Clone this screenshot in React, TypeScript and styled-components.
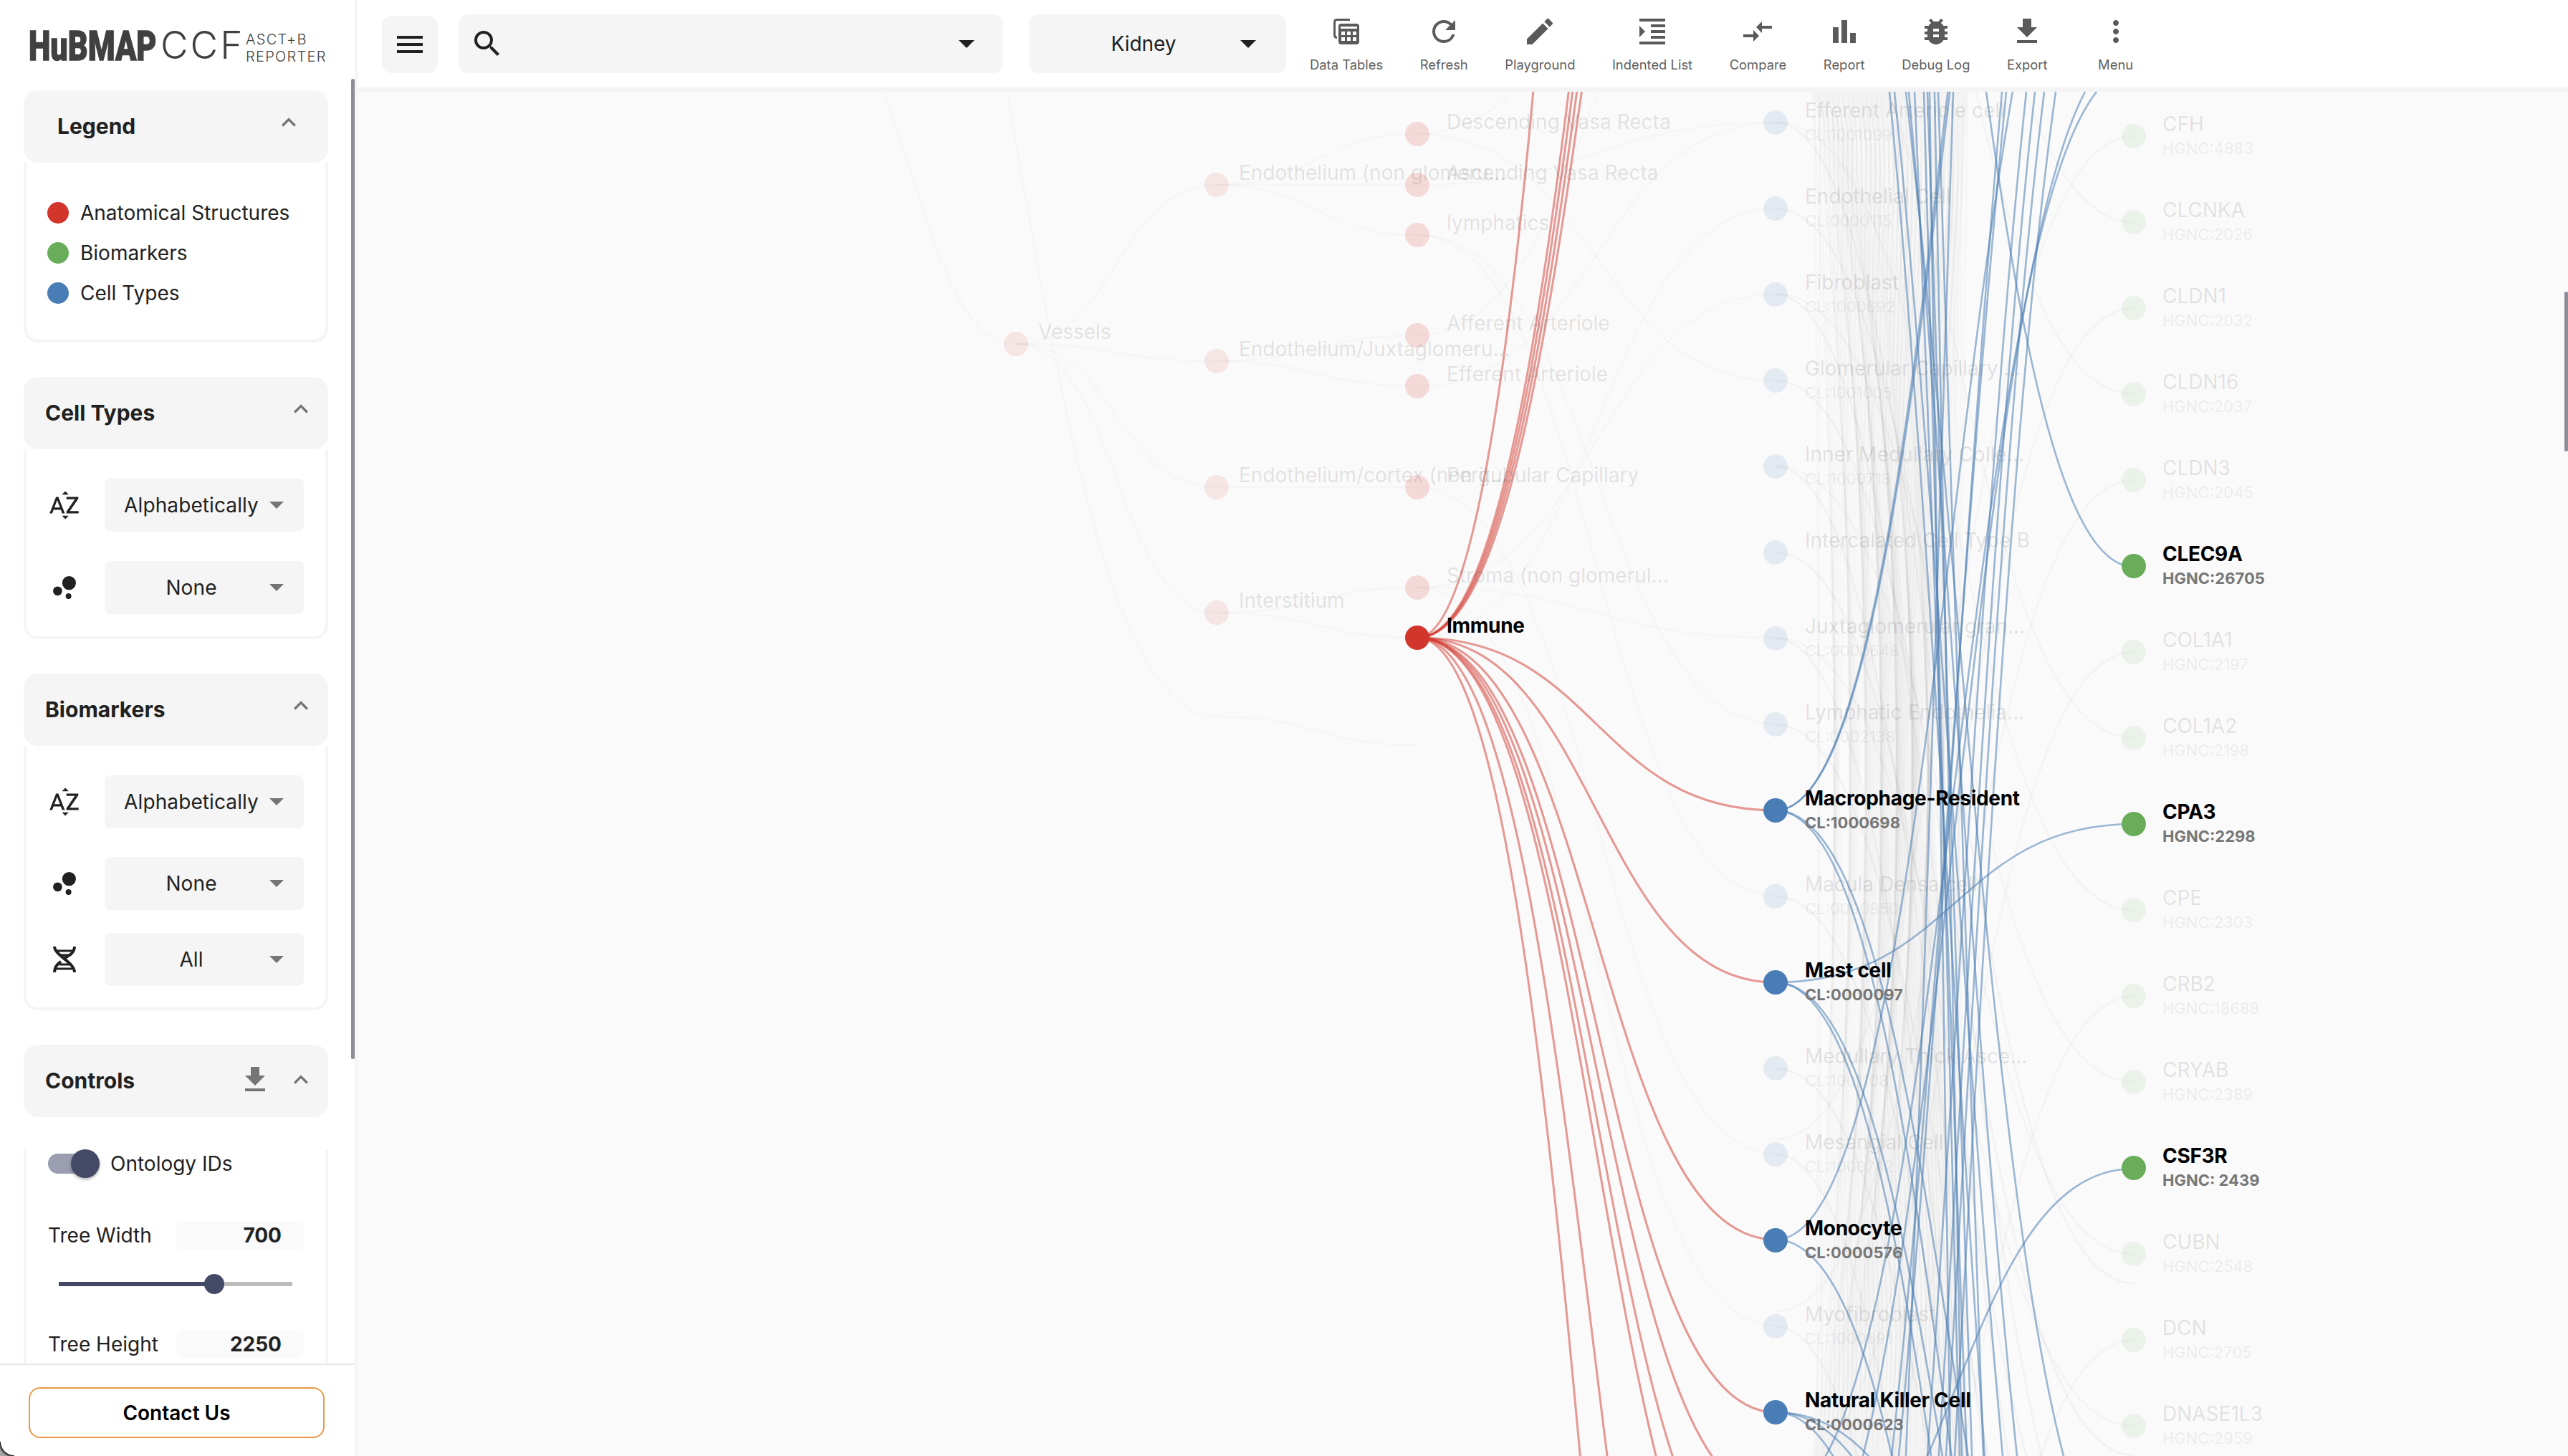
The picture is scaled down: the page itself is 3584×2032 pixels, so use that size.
import React from 'react';
import styled, { createGlobalStyle } from 'styled-components';
import {
  MdRefresh, MdEdit, MdFormatIndentIncrease, MdCompareArrows, MdBarChart,
  MdBugReport, MdFileDownload, MdMoreVert, MdMenu, MdSearch, MdExpandLess, MdSortByAlpha,
  MdBubbleChart,
} from 'react-icons/md';

const Global = createGlobalStyle`
  html, body { margin: 0; padding: 0; background: #fff; overflow: hidden; }
  * { box-sizing: border-box; }
  body { font-family: Inter, "Noto Sans", sans-serif; color: #212121; }
`;

const Page = styled.div`
  position: relative;
  width: 3584px;
  height: 2032px;
  display: flex;
  overflow: hidden;
`;

const Sidebar = styled.aside`
  width: 499px;
  height: 100%;
  flex: none;
  display: flex;
  flex-direction: column;
  background: #fff;
  border-right: 4px solid #f5f5f5;
  position: relative;
`;

const LogoBar = styled.div`
  height: 126px;
  flex: none;
  display: flex;
  align-items: flex-start;
  padding: 43px 0 0 40px;
  color: #404040;
`;

const LogoHeavy = styled.span`
  display: block;
  width: 184px;
  font: 900 58px/42px Roboto, sans-serif;
  -webkit-text-stroke: 1.4px #404040;
  transform: scaleX(0.745);
  transform-origin: left center;
  white-space: nowrap;
`;

const LogoThin = styled.span`
  display: block;
  width: 119px;
  font: 300 53px/40px Inter, sans-serif;
  letter-spacing: 3px;
  white-space: nowrap;
`;

const LogoSmall = styled.span`
  display: block;
  font: 300 20px/23px Inter, sans-serif;
  letter-spacing: 1.3px;
  white-space: nowrap;
  padding-top: 1px;
`;

const Scroller = styled.div`
  flex: 1;
  min-height: 0;
  overflow: hidden;
  padding: 0 0 0 33px;
`;

const Panel = styled.section`
  width: 425px;
  margin-bottom: 48px;
`;

const PanelHeader = styled.header<{ $inset?: boolean }>`
  height: 101px;
  background: #f5f5f5;
  border-radius: 20px;
  display: flex;
  align-items: flex-start;
  padding: 30px 0 0 ${p => (p.$inset ? 47 : 30)}px;
  position: relative;
`;

const PanelTitle = styled.h2`
  margin: 0;
  flex: 1;
  font: 700 30px/40px Inter, sans-serif;
  color: #212121;
`;

const HeaderIcons = styled.div<{ $right: number }>`
  display: flex;
  align-items: center;
  gap: 20px;
  color: #757575;
  padding-right: ${p => p.$right}px;
  margin-top: -5px;
`;

const PanelBody = styled.div<{ $top: number; $bottom: number }>`
  border: 4px solid #f5f5f5;
  border-top: 0;
  border-radius: 0 0 20px 20px;
  padding: ${p => p.$top}px 30px ${p => p.$bottom}px 30px;
`;

const LegendRow = styled.div`
  height: 56px;
  display: flex;
  align-items: center;
  gap: 16px;
  font: 400 28px/40px Inter, sans-serif;
  margin-left: -1px;
`;

const Dot = styled.span<{ $color: string }>`
  width: 30px;
  height: 30px;
  border-radius: 50%;
  background: ${p => p.$color};
`;

const SelectRow = styled.div<{ $gap: number }>`
  display: flex;
  align-items: center;
  margin-bottom: ${p => p.$gap}px;
  &:last-child { margin-bottom: 0; }
`;

const RowIcon = styled.div`
  width: 109px;
  margin-left: -30px;
  padding-right: 3px;
  flex: none;
  display: flex;
  justify-content: center;
  color: #212121;
  svg { display: block; }
`;

const SelectBox = styled.div`
  width: 278px;
  height: 74px;
  background: #f5f5f5;
  border-radius: 8px;
  display: flex;
  align-items: center;
  padding: 0 28px 0 18px;
  font: 400 28px/40px Inter, sans-serif;
  color: #212121;
  letter-spacing: 0.1px;
`;

const SelectText = styled.span`
  flex: 1;
  text-align: center;
  white-space: nowrap;
`;

const SelectArrow = styled.span`
  width: 0;
  height: 0;
  border-left: 10px solid transparent;
  border-right: 10px solid transparent;
  border-top: 10px solid #757575;
  margin-left: 6px;
`;

const ToggleRow = styled.div`
  display: flex;
  align-items: center;
  gap: 15px;
  height: 40px;
  font: 400 28px/40px Inter, sans-serif;
  margin-top: 45px;
`;

const Toggle = styled.span`
  position: relative;
  width: 72px;
  height: 28px;
  border-radius: 14px;
  background: #9a9eb0;
`;

const ToggleThumb = styled.span`
  position: absolute;
  right: 0;
  top: -6px;
  width: 40px;
  height: 40px;
  border-radius: 50%;
  background: #444a65;
  box-shadow: 0 2px 4px rgba(0, 0, 0, 0.3);
`;

const FieldRow = styled.div<{ $top: number }>`
  display: flex;
  align-items: center;
  justify-content: space-between;
  height: 40px;
  margin-top: ${p => p.$top}px;
  font: 400 28px/40px Inter, sans-serif;
`;

const FieldValue = styled.span`
  width: 178px;
  height: 40px;
  background: #fafafa;
  border-radius: 8px;
  text-align: right;
  padding-right: 31px;
  font: 700 28px/40px Inter, sans-serif;
`;

const SliderTrack = styled.div`
  position: relative;
  width: 326px;
  height: 6px;
  margin: 45px 0 0 15px;
  background: #bdbdbd;
`;

const SliderFill = styled.div`
  height: 100%;
  background: #444a65;
`;

const SliderThumb = styled.span`
  position: absolute;
  top: -11px;
  width: 28px;
  height: 28px;
  margin-left: -14px;
  border-radius: 50%;
  background: #444a65;
`;

const Footer = styled.div`
  height: 129px;
  flex: none;
  border-top: 2px solid #e6e6e6;
  padding: 31px 38px 0 40px;
  background: #fff;
`;

const ContactButton = styled.button`
  width: 413px;
  height: 71px;
  background: #fff;
  border: 2px solid #ea9a49;
  border-radius: 16px;
  font: 600 28px/40px Inter, sans-serif;
  color: #000;
  padding: 0;
`;

const Scrollbar = styled.div<{ $left: number; $top: number; $h: number }>`
  position: absolute;
  left: ${p => p.$left}px;
  top: ${p => p.$top}px;
  width: 5px;
  height: ${p => p.$h}px;
  background: #8b8d99;
  border-radius: 3px;
  z-index: 5;
`;

const WindowCorner = styled.div`
  position: absolute;
  left: 0;
  bottom: 0;
  width: 20px;
  height: 20px;
  background: radial-gradient(circle at 100% 0, transparent 18.5px, #222 19.5px, #a8a8a8 23px);
  z-index: 6;
`;

const Main = styled.main`
  flex: 1;
  min-width: 0;
  display: flex;
  flex-direction: column;
`;

const Toolbar = styled.div`
  height: 128px;
  flex: none;
  background: #fff;
  border-bottom: 6px solid #f4f4f5;
  padding: 20px 0 0 34px;
  display: flex;
  align-items: flex-start;
`;

const MenuButton = styled.div`
  width: 78px;
  height: 80px;
  margin-top: 2px;
  background: #f5f5f5;
  border-radius: 14px;
  display: flex;
  align-items: center;
  justify-content: center;
  color: #212121;
`;

const SearchBox = styled.div`
  width: 760px;
  height: 82px;
  margin-left: 29px;
  background: #f5f5f5;
  border-radius: 14px;
  display: flex;
  align-items: center;
  padding: 0 40px 0 16px;
  color: #212121;
  justify-content: space-between;
`;

const KidneyBox = styled.div`
  width: 359px;
  height: 82px;
  margin-left: 36px;
  background: #f5f5f5;
  border-radius: 14px;
  display: flex;
  align-items: center;
  padding: 0 42px 0 25px;
  font: 400 28px/40px Inter, sans-serif;
  color: #212121;
`;

const KidneyText = styled.span`
  flex: 1;
  text-align: center;
`;

const DarkArrow = styled.span`
  width: 0;
  height: 0;
  border-left: 11px solid transparent;
  border-right: 11px solid transparent;
  border-top: 11px solid #212121;
`;

const Tools = styled.div`
  display: flex;
  gap: 51.5px;
  margin-left: 33px;
`;

const ToolItem = styled.div`
  display: flex;
  flex-direction: column;
  align-items: center;
  color: #5a5a5a;
  &:last-child { margin-left: 19px; }
  svg { display: block; }
`;

const ToolLabel = styled.span`
  font: 400 18.4px/22px Inter, sans-serif;
  color: #5f5f5f;
  white-space: nowrap;
  margin-top: 11px;
`;

const Graph = styled.div`
  flex: 1;
  min-height: 0;
  position: relative;
  overflow: hidden;
  background: #fafafa;
`;

/* the tree is a free canvas: every item has its place from the data, in page coordinates */
const Canvas = styled.div`
  position: absolute;
  left: -499px;
  top: -128px;
  width: 3584px;
  height: 2032px;
`;

const Wires = styled.svg`
  position: absolute;
  left: 0;
  top: 0;
`;

const NodeLabel = styled.div<{ $on?: boolean }>`
  position: absolute;
  white-space: nowrap;
  font: ${p => (p.$on ? 700 : 400)} 28px/34px Inter, sans-serif;
  letter-spacing: ${p => (p.$on ? '-0.3px' : '0')};
  color: ${p => (p.$on ? '#000' : 'rgba(90,90,90,0.16)')};
`;

const NodeId = styled.div<{ $on?: boolean }>`
  font: ${p => (p.$on ? 700 : 400)} 22px/35px Inter, sans-serif;
  letter-spacing: 0;
  color: ${p => (p.$on ? '#777' : 'rgba(90,90,90,0.1)')};
`;

const RED = '#d1352b';
const GREEN = '#69ad5a';
const BLUE = '#4a7db5';

const asNodes: [number, number, string, number, boolean?][] = [
  [1418, 480, 'Vessels', 31, false],
  [1698, 258, 'Endothelium (non glomeru...', 31],
  [1698, 504, 'Endothelium/Juxtaglomeru...', 31],
  [1698, 680, 'Endothelium/cortex (non g...', 31],
  [1698, 855, 'Interstitium', 31],
  [1978, 187, 'Descending Vasa Recta', 41],
  [1978, 258, 'Ascending Vasa Recta', 41],
  [1978, 328, 'lymphatics', 41],
  [1978, 468, 'Afferent Arteriole', 41],
  [1978, 539, 'Efferent Arteriole', 41],
  [1978, 680, 'Peritubular Capillary', 41],
  [1978, 820, 'Stroma (non glomerul...', 41],
  [1978, 890, 'Immune', 41, true],
];

const ctNodes: [string, string, boolean?][] = [
  ['Efferent Arteriole cell', 'CL:1001099'],
  ['Endothelial Cell', 'CL:0000115'],
  ['Fibroblast', 'CL:1000692'],
  ['Glomerular Capillary ...', 'CL:1001005'],
  ['Inner Medullary Colle...', 'CL:1000718'],
  ['Intercalated Cell Type B', ''],
  ['Juxtaglomerular gran...', 'CL:0000648'],
  ['Lymphatic Endothelia...', 'CL:0002138'],
  ['Macrophage-Resident', 'CL:1000698', true],
  ['Macula Densa cell', 'CL:0000850'],
  ['Mast cell', 'CL:0000097', true],
  ['Medullary Thick Asce...', 'CL:1001108'],
  ['Mesangial Cell', 'CL:1000742'],
  ['Monocyte', 'CL:0000576', true],
  ['Myofibroblast', 'CL:1000691'],
  ['Natural Killer Cell', 'CL:0000623', true],
];

const bmNodes: [string, string, boolean?][] = [
  ['CFH', 'HGNC:4883'],
  ['CLCNKA', 'HGNC:2026'],
  ['CLDN1', 'HGNC:2032'],
  ['CLDN16', 'HGNC:2037'],
  ['CLDN3', 'HGNC:2045'],
  ['CLEC9A', 'HGNC:26705', true],
  ['COL1A1', 'HGNC:2197'],
  ['COL1A2', 'HGNC:2198'],
  ['CPA3', 'HGNC:2298', true],
  ['CPE', 'HGNC:2303'],
  ['CRB2', 'HGNC:18688'],
  ['CRYAB', 'HGNC:2389'],
  ['CSF3R', 'HGNC: 2439', true],
  ['CUBN', 'HGNC:2548'],
  ['DCN', 'HGNC:2705'],
  ['DNASE1L3', 'HGNC:2959'],
];

const ctY = (i: number) => 171 + i * 120;
const bmY = (i: number) => 190 + i * 120;

const link = (x0: number, y0: number, x1: number, y1: number) => {
  const m = (x0 + x1) / 2;
  return `M${x0} ${y0}C${m} ${y0} ${m} ${y1} ${x1} ${y1}`;
};

/* S-curve share of the height reached at a given share of the width */
const shareAt = (f: number) => {
  let lo = 0;
  let hi = 1;
  for (let i = 0; i < 30; i++) {
    const t = (lo + hi) / 2;
    if (1.5 * t - 1.5 * t * t + t * t * t < f) lo = t;
    else hi = t;
  }
  return 3 * lo * lo - 2 * lo * lo * lo;
};

/* a CT to biomarker link whose ends are off-canvas, given where it crosses the top and bottom */
const through = (xTop: number, xBot: number) => {
  const a = shareAt((xTop - 2478) / 500);
  const b = shareAt((xBot - 2478) / 500);
  const d = 1904 / (b - a);
  const y0 = 128 - d * a;
  return link(2478, y0, 2978, y0 + d);
};

const redTargets = [-3110, -1290, -1170, -1050, -930, 1131, 1371, 1730, 1971, 2092, 2226, 2325, 2930, 3670];

const blueDirect: [number, number][] = [
  [1131, -988], [1131, -1040], [1131, 2700], [1131, 3000],
  [1371, 1150], [1371, 2900], [1371, 3150], [1730, -300], [1730, 3300],
  [1971, 2500], [1971, 2800], [1971, 3500], [2250, 1631], [-1218, 791],
];

const blueThrough: [number, number][] = [
  [2637, 2770], [2644, 2795], [2664, 2815], [2672, 2745], [2685, 2735], [2693, 2722], [2705, 2768],
  [2726, 2660], [2794, 2650], [2828, 2690], [2840, 2706], [2853, 2716], [2869, 2728], [2800, 2640],
  [2910, 2600], [2926, 2548], [2690, 2752], [2700, 2738], [2660, 2880],
];

const greyThrough = Array.from({ length: 150 }, (_, i) => {
  const a = (i * 37) % 150;
  const b = (i * 83 + 41) % 150;
  return [2530 + a * 1.45, 2530 + b * 1.45 + (a === b ? 3 : 0)] as [number, number];
});

const asFaint: [number, number, number, number][] = [
  [1138, 37, 1418, 480], [1138, -600, 1698, 1000], [1698, 1000, 1978, 1040],
  [1418, 480, 1698, 258], [1418, 480, 1698, 504], [1418, 480, 1698, 680], [1418, 480, 1698, 855],
  [1698, 258, 1978, 187], [1698, 258, 1978, 258], [1698, 258, 1978, 328],
  [1698, 504, 1978, 468], [1698, 504, 1978, 539], [1698, 680, 1978, 680],
  [1698, 855, 1978, 820], [1698, 855, 1978, 890],
  [1978, 187, 2478, -300], [1978, 258, 2478, 171], [1978, 328, 2478, 1010], [1978, 468, 2478, -200],
  [1978, 539, 2478, 171], [1978, 680, 2478, 1610], [1978, 820, 2478, 1850], [1978, 820, 2478, 411],
  [1978, 820, 2478, 890], [1978, 890, 2478, 291],
  [1978, 187, 2478, 531], [1978, 328, 2478, 1250],
];

const Chevron = () => <MdExpandLess size={40} />;

const DnaIcon = () => (
  <svg width="32" height="36" viewBox="0 0 32 36" fill="none" stroke="currentColor">
    <path d="M2 0C2 12 30 22 30 36" strokeWidth="4" />
    <path d="M30 0C30 9 22 13 16 16M11 21C5 25 2 29 2 36" strokeWidth="4" />
    <path d="M3 6H29M9 12H23M9 25H23M3 31H29" strokeWidth="3" />
  </svg>
);

const DataTablesIcon = ({ size = 48 }: { size?: number }) => (
  <svg width={size} height={size} viewBox="0 0 48 48">
    <path d="M29 7.5H11Q7.5 7.5 7.5 11V29Q7.5 32.5 11 32.5" fill="none" stroke="currentColor" strokeWidth="3" />
    <rect x="13" y="13" width="29" height="29" rx="4" fill="currentColor" />
    <rect x="16" y="17" width="23" height="3" fill="#fff" />
    <path d="M17 24h5v5h-5zM25 24h5v5h-5zM33 24h5v5h-5zM17 32h5v5h-5zM25 32h5v5h-5zM33 32h5v5h-5z" fill="#fff" />
  </svg>
);

const AzIcon = () => <MdSortByAlpha size={48} />;
const BubbleIcon = () => <MdBubbleChart size={48} />;

const selectRow = (icon: React.ReactNode, value: string, gap: number) => (
  <SelectRow $gap={gap} key={value + gap}>
    <RowIcon>{icon}</RowIcon>
    <SelectBox>
      <SelectText>{value}</SelectText>
      <SelectArrow />
    </SelectBox>
  </SelectRow>
);

const tools: [React.ComponentType<{ size?: number }>, string][] = [
  [DataTablesIcon, 'Data Tables'],
  [MdRefresh, 'Refresh'],
  [MdEdit, 'Playground'],
  [MdFormatIndentIncrease, 'Indented List'],
  [MdCompareArrows, 'Compare'],
  [MdBarChart, 'Report'],
  [MdBugReport, 'Debug Log'],
  [MdFileDownload, 'Export'],
  [MdMoreVert, 'Menu'],
];

export default function App() {
  return (
    <Page>
      <Global />
      <Sidebar>
        <LogoBar>
          <LogoHeavy>HuBMAP</LogoHeavy>
          <LogoThin>CCF</LogoThin>
          <div>
            <LogoSmall>ASCT+B</LogoSmall>
            <LogoSmall>REPORTER</LogoSmall>
          </div>
        </LogoBar>
        <Scroller>
          <Panel>
            <PanelHeader $inset>
              <PanelTitle>Legend</PanelTitle>
              <HeaderIcons $right={35}><Chevron /></HeaderIcons>
            </PanelHeader>
            <PanelBody $top={42} $bottom={37}>
              <LegendRow><Dot $color={RED} />Anatomical Structures</LegendRow>
              <LegendRow><Dot $color={GREEN} />Biomarkers</LegendRow>
              <LegendRow><Dot $color={BLUE} />Cell Types</LegendRow>
            </PanelBody>
          </Panel>
          <Panel>
            <PanelHeader>
              <PanelTitle>Cell Types</PanelTitle>
              <HeaderIcons $right={18}><Chevron /></HeaderIcons>
            </PanelHeader>
            <PanelBody $top={41} $bottom={31}>
              {selectRow(<AzIcon />, 'Alphabetically', 41)}
              {selectRow(<BubbleIcon />, 'None', 0)}
            </PanelBody>
          </Panel>
          <Panel>
            <PanelHeader>
              <PanelTitle>Biomarkers</PanelTitle>
              <HeaderIcons $right={18}><Chevron /></HeaderIcons>
            </PanelHeader>
            <PanelBody $top={41} $bottom={30}>
              {selectRow(<AzIcon />, 'Alphabetically', 40)}
              {selectRow(<BubbleIcon />, 'None', 32)}
              {selectRow(<DnaIcon />, 'All', 0)}
            </PanelBody>
          </Panel>
          <Panel>
            <PanelHeader>
              <PanelTitle>Controls</PanelTitle>
              <HeaderIcons $right={18}>
                <MdFileDownload size={48} />
                <Chevron />
              </HeaderIcons>
            </PanelHeader>
            <PanelBody $top={0} $bottom={40}>
              <ToggleRow>
                <Toggle><ToggleThumb /></Toggle>
                Ontology IDs
              </ToggleRow>
              <FieldRow $top={60}>Tree Width<FieldValue>700</FieldValue></FieldRow>
              <SliderTrack>
                <SliderFill style={{ width: `${(217 / 326) * 100}%` }} />
                <SliderThumb style={{ left: `${(217 / 326) * 100}%` }} />
              </SliderTrack>
              <FieldRow $top={61}>Tree Height<FieldValue>2250</FieldValue></FieldRow>
            </PanelBody>
          </Panel>
        </Scroller>
        <Footer><ContactButton>Contact Us</ContactButton></Footer>
        <WindowCorner />
      </Sidebar>
      <Scrollbar $left={490} $top={110} $h={1368} />
      <Main>
        <Toolbar>
          <MenuButton><MdMenu size={48} /></MenuButton>
          <SearchBox>
            <MdSearch size={48} />
            <DarkArrow />
          </SearchBox>
          <KidneyBox>
            <KidneyText>Kidney</KidneyText>
            <DarkArrow />
          </KidneyBox>
          <Tools>
            {tools.map(([Icon, label]) => (
              <ToolItem key={label}>
                <Icon size={48} />
                <ToolLabel>{label}</ToolLabel>
              </ToolItem>
            ))}
          </Tools>
        </Toolbar>
        <Graph>
          <Canvas>
            <Wires width="3584" height="2032" fill="none">
              <g stroke="#000" strokeOpacity="0.015" strokeWidth="3">
                {asFaint.map(([a, b, c, d], i) => <path key={i} d={link(a, b, c, d)} />)}
              </g>
              <g stroke="#000" strokeOpacity="0.014" strokeWidth="3">
                {greyThrough.map(([a, b], i) => <path key={i} d={through(a, b)} />)}
                {ctNodes.map((n, i) => (n[2] ? null : (
                  <path key={n[0]} d={link(2478, ctY(i), 2978, ctY(i) + (i % 2 ? 1500 : 2100))} strokeOpacity="0.03" />
                )))}
                {bmNodes.map((n, i) => (n[2] ? null : (
                  <path key={n[0]} d={link(2478, bmY(i) + (i % 2 ? -1100 : 1400), 2978, bmY(i))} strokeOpacity="0.022" />
                )))}
              </g>
              <g stroke={RED} strokeOpacity="0.5" strokeWidth="3">
                {redTargets.map(y => <path key={y} d={link(1978, 890, 2478, y)} />)}
              </g>
              <g stroke={BLUE} strokeOpacity="0.55" strokeWidth="2.6">
                {blueDirect.map(([a, b]) => <path key={`${a}-${b}`} d={link(2478, a, 2978, b)} />)}
                {blueThrough.map(([a, b]) => <path key={`${a}-${b}`} d={through(a, b)} />)}
              </g>
              {asNodes.map(([x, y, name, , on], i) => (
                <circle key={name} cx={x} cy={y} r="17" fill={RED} fillOpacity={on ? 1 : i < 5 ? 0.1 : 0.16} />
              ))}
              {ctNodes.map((n, i) => (
                <circle key={n[0]} cx="2478" cy={ctY(i)} r="17" fill={BLUE} fillOpacity={n[2] ? 1 : 0.12} />
              ))}
              {bmNodes.map((n, i) => (
                <circle key={n[0]} cx="2978" cy={bmY(i)} r="17" fill={GREEN} fillOpacity={n[2] ? 1 : 0.1} />
              ))}
            </Wires>
            {asNodes.map(([x, y, name, dx, on]) => (
              <NodeLabel key={name} $on={on} style={{ left: x + dx, top: y - 34 }}>{name}</NodeLabel>
            ))}
            {ctNodes.map((n, i) => (
              <NodeLabel key={n[0]} $on={n[2]} style={{ left: 2519, top: ctY(i) - 34 }}>
                {n[0]}
                <NodeId $on={n[2]}>{n[1]}</NodeId>
              </NodeLabel>
            ))}
            {bmNodes.map((n, i) => (
              <NodeLabel key={n[0]} $on={n[2]} style={{ left: 3018, top: bmY(i) - 34 }}>
                {n[0]}
                <NodeId $on={n[2]}>{n[1]}</NodeId>
              </NodeLabel>
            ))}
          </Canvas>
        </Graph>
      </Main>
      <Scrollbar $left={3579} $top={407} $h={223} />
    </Page>
  );
}
